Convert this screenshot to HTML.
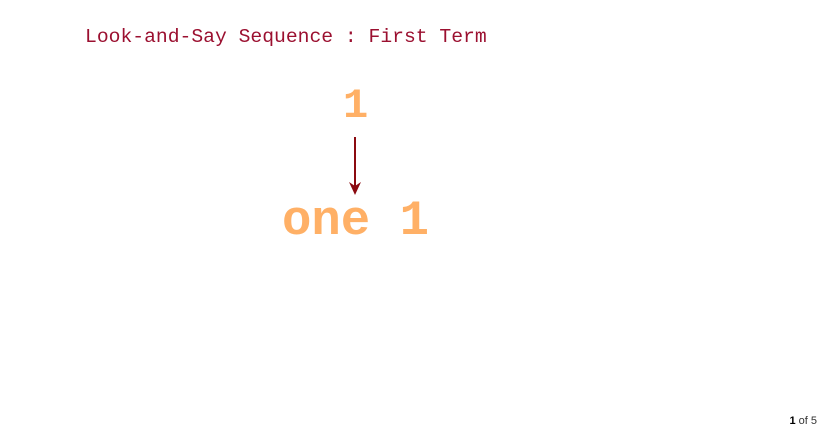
<!DOCTYPE html>
<html><head><style>
html,body{margin:0;padding:0;background:#fff;width:823px;height:430px;overflow:hidden;position:relative}
.t{position:absolute;font-family:"Liberation Mono",monospace;white-space:pre}
</style></head><body>
<div class="t" style="left:85px;top:25px;font-size:19.7px;line-height:24px;color:#9b1030">Look-and-Say Sequence : First Term</div>
<div class="t" style="left:343px;top:78px;font-size:42px;line-height:56px;font-weight:bold;color:#ffb066">1</div>
<svg style="position:absolute;left:345px;top:135px" width="20" height="62"><line x1="10" y1="2" x2="10" y2="52" stroke="#8b0a10" stroke-width="2"/><path d="M4 47 L10 60 L16 47 L10 51 Z" fill="#8b0a10"/></svg>
<div class="t" style="left:282px;top:193px;font-size:49px;line-height:56px;font-weight:bold;color:#ffb066">one 1</div>
<div style="position:absolute;right:6px;top:415px;font-family:'Liberation Sans',sans-serif;font-size:11px;color:#333"><b style="color:#000">1</b> of 5</div>
</body></html>
